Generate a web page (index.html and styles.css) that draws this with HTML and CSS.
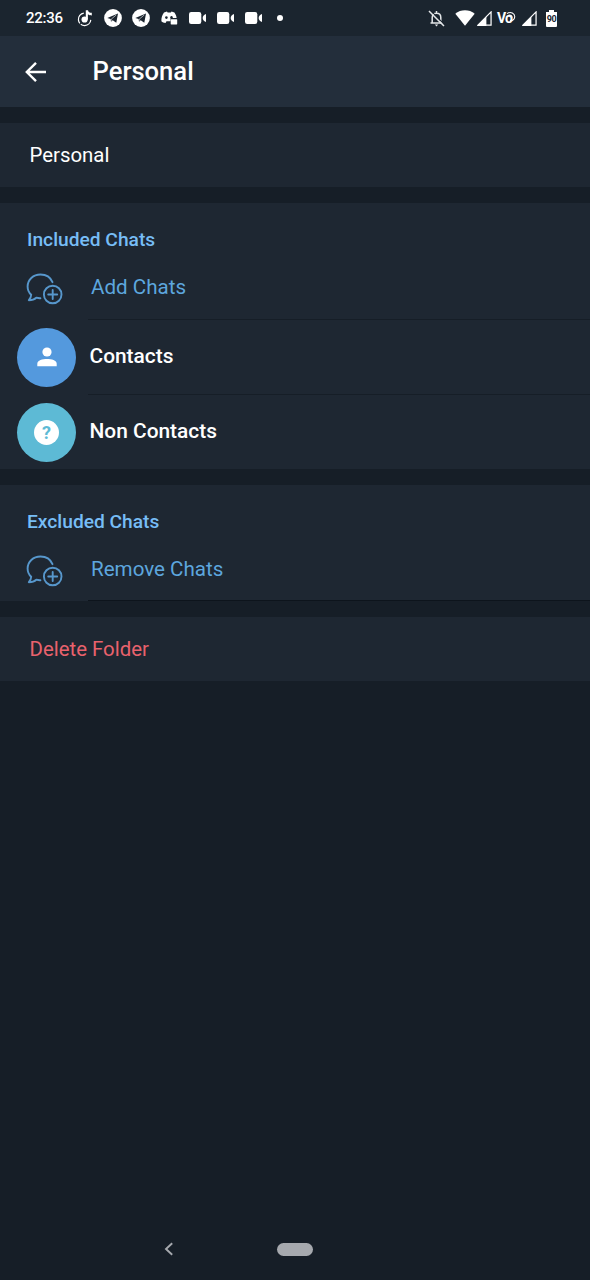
FILE: index.html
```html
<!DOCTYPE html>
<html lang="en">
<head>
  <meta charset="UTF-8" />
  <title>Personal</title>
  <meta name="viewport" content="width=device-width, initial-scale=1" />
  <link rel="stylesheet" href="styles.css">
</head>
<body>
  <!-- shared icons -->
  <svg class="sprite" aria-hidden="true">
    <symbol id="telegram" viewBox="0 0 18 18">
      <circle cx="9" cy="9" r="8.9" fill="#fff"/>
      <path d="M3.3 9 14 4.5 12.3 13.8 8.7 11.2 7 12.7 6.6 10.1Z" fill="#1b252f"/>
      <path d="M7 12.2 7.3 10.1 12.2 6" fill="none" stroke="#fff" stroke-width=".6"/>
    </symbol>
    <symbol id="camera" viewBox="0 0 18 12">
      <rect x="0" y="0" width="12.3" height="12" rx="2.2" fill="#fff"/>
      <path d="M17 2V10C14.6 9 13.7 7.8 13.7 6S14.6 3 17 2Z" fill="#fff"/>
    </symbol>
    <symbol id="signal" viewBox="0 0 16 16">
      <path d="M15 1V15H1Z" fill="none" stroke="#fff" stroke-width="1.3"/>
      <path d="M0 16 10 6V16Z" fill="#fff"/>
    </symbol>
    <symbol id="chat-add" viewBox="0 0 38 32">
      <g fill="none" stroke="#5797cc" stroke-width="1.9" stroke-linecap="round" stroke-linejoin="round">
        <path d="M26.5 9.2C24.5 4.3 20 1.5 14.5 1.5 7.2 1.5 1.6 6.8 1.6 13.5 1.6 17 3 19.7 5.2 21.8 5.1 24 4.2 25.8 2.8 27.2 5.8 27.2 8.5 26.4 10.3 24.7 11.8 25.1 13 25.3 14.4 25.2"/>
        <circle cx="26.7" cy="21.5" r="8.8"/>
        <path d="M26.7 17V26M22.2 21.5H31.2"/>
      </g>
    </symbol>
  </svg>

  <div class="status-bar">
    <span class="clock">22:36</span>
    <div class="notifications">
      <span class="slot">
        <svg width="16" height="18" viewBox="0 0 16 18">
          <path d="M6.8 4.2A6.2 6.2 0 1 0 13.8 10.5" fill="none" stroke="#fff" stroke-width="1.2" stroke-dasharray="13 1.2"/>
          <circle cx="7.6" cy="10.5" r="3.1" fill="#fff"/>
          <path d="M8.8 10.5V1.2H11C11.3 3 12.7 3.8 14.8 3.8V6.4C13.2 6.4 12 6 10.9 5.2V10.5Z" fill="#fff"/>
        </svg>
      </span>
      <span class="slot"><svg width="18" height="18"><use href="#telegram"/></svg></span>
      <span class="slot"><svg width="18" height="18"><use href="#telegram"/></svg></span>
      <span class="slot">
        <svg width="17" height="14" viewBox="0 0 17 14">
          <path d="M3 1.5 6 .4 6.6 1.5H9.8L10.6.4 13.4 1.5C14.8 3.4 15.4 5 15.6 7H9.5V10.3H5.5L4.5 12C2.8 11.8 1.5 11.2.4 10.2.3 7 1.1 4 3 1.5Z" fill="#fff"/>
          <circle cx="5.4" cy="6.6" r="1.3" fill="#1b252f"/>
          <circle cx="10.5" cy="6.2" r="1.2" fill="#1b252f"/>
          <rect x="9.7" y="8.2" width="6.5" height="5.2" rx=".6" fill="#fff"/>
        </svg>
      </span>
      <span class="slot"><svg class="camera" width="18" height="12"><use href="#camera"/></svg></span>
      <span class="slot"><svg class="camera" width="18" height="12"><use href="#camera"/></svg></span>
      <span class="slot"><svg class="camera" width="18" height="12"><use href="#camera"/></svg></span>
      <span class="slot"><i class="dot"></i></span>
    </div>
    <div class="system">
      <svg class="bell" width="17" height="17" viewBox="0 0 17 17">
        <path d="M4.2 13V7.5C4.2 5 5.8 3.3 8.5 3.3S12.8 5 12.8 7.5V13M2.5 13H14.5M8.5 1V3" fill="none" stroke="#e5e8ea" stroke-width="1.5"/>
        <path d="M6.8 14.5H10.2L8.5 16.5Z" fill="#e5e8ea"/>
        <path d="M2.6.6 17 15" stroke="#1b252f" stroke-width="1.1"/>
        <path d="M1 1 16 16" stroke="#e5e8ea" stroke-width="1.5"/>
      </svg>
      <svg class="wifi" width="20" height="16" viewBox="0 0 20 16">
        <path d="M.3 3.8C5.8-.8 14.2-.8 19.7 3.8L10 15.7Z" fill="#fff"/>
      </svg>
      <svg class="signal" width="15" height="15"><use href="#signal"/></svg>
      <span class="volte">Vo<svg width="10" height="12" viewBox="0 0 10 12"><path d="M1 2.6C4.6.2 9 2.4 8.7 6 8.5 8.8 6 10 4 9.4M2 4.6C4.4 3.4 6.6 4.8 5.8 7.2" fill="none" stroke="#fff" stroke-width="1.1"/></svg></span>
      <svg class="signal" width="15" height="15"><use href="#signal"/></svg>
      <span class="battery">90</span>
    </div>
  </div>

  <header class="header">
    <svg class="back" width="22" height="22" viewBox="0 0 22 22">
      <path d="M21 11H2.5M11 1.8 1.8 11 11 20.2" fill="none" stroke="#fff" stroke-width="2.4"/>
    </svg>
    <h1 class="title">Personal</h1>
  </header>

  <main class="content">
    <section class="card field">Personal</section>

    <section class="card">
      <h2 class="section-title">Included Chats</h2>
      <div class="row action">
        <svg class="row-icon" width="38" height="32"><use href="#chat-add"/></svg>
        <span>Add Chats</span>
      </div>
      <div class="row chat">
        <span class="avatar contacts">
          <svg width="20" height="20" viewBox="0 0 20 20">
            <circle cx="10" cy="5" r="4.6" fill="#fff"/>
            <path d="M.3 19.3V16.8C.3 13.5 5.5 12.1 10 12.1S19.7 13.5 19.7 16.8V19.3Z" fill="#fff"/>
          </svg>
        </span>
        <span class="name">Contacts</span>
      </div>
      <div class="row chat">
        <span class="avatar non-contacts"><i class="question">?</i></span>
        <span class="name">Non Contacts</span>
      </div>
    </section>

    <section class="card excluded">
      <h2 class="section-title">Excluded Chats</h2>
      <div class="row action">
        <svg class="row-icon" width="38" height="32"><use href="#chat-add"/></svg>
        <span>Remove Chats</span>
      </div>
    </section>

    <section class="card field delete">Delete Folder</section>
  </main>

  <nav class="nav-bar">
    <svg width="10" height="14" viewBox="0 0 10 14">
      <path d="M8.2 1.2 2 7 8.2 12.8" fill="none" stroke="#a6a9ae" stroke-width="1.9"/>
    </svg>
    <span class="home"></span>
  </nav>
</body>
</html>
```

FILE: styles.css
```css
:root {
  --bg: #161e27;
  --card: #1e2732;
  --header: #232e3b;
  --status: #1b252f;
  --line: #161e27;
}
* {
  box-sizing: border-box;
}
body {
  margin: 0;
  height: 1280px;
  display: flex;
  flex-direction: column;
  background: var(--bg);
  color: #fff;
  font-family: Roboto, "Liberation Sans", sans-serif;
  overflow: hidden;
}
svg {
  display: block;
  flex: none;
}
.sprite {
  position: absolute;
  width: 0;
  height: 0;
}

/* status bar */
.status-bar {
  flex: none;
  height: 36px;
  display: flex;
  align-items: center;
  padding: 0 33px 0 26px;
  background: var(--status);
}
.clock {
  width: 45px;
  font-size: 15px;
  font-weight: 500;
  letter-spacing: -0.25px;
}
.notifications {
  display: flex;
}
.slot {
  width: 28px;
  height: 36px;
  display: flex;
  align-items: center;
  justify-content: center;
}
.camera {
  margin-left: 2px;
}
.dot {
  width: 6px;
  height: 6px;
  margin-right: 2px;
  border-radius: 50%;
  background: #fff;
}
.system {
  margin-left: auto;
  display: flex;
  align-items: center;
}
.bell {
  margin-right: 10px;
}
.wifi {
  margin-right: 2px;
}
.volte {
  width: 30px;
  padding-left: 5px;
  display: flex;
  align-items: center;
  font-size: 14px;
  font-weight: 700;
  letter-spacing: -0.8px;
}
.volte svg {
  margin: -2px 0 0 -6px;
}
.battery {
  width: 11px;
  height: 17px;
  margin-left: 9px;
  background: linear-gradient(#fff, #fff) center top / 5px 3px no-repeat,
    linear-gradient(#fff, #fff) center bottom / 11px 15px no-repeat;
  border-radius: 1px;
  color: #1b252f;
  font-size: 9px;
  font-weight: 700;
  line-height: 19px;
  text-align: center;
  letter-spacing: -0.3px;
}

/* header */
.header {
  flex: none;
  height: 71px;
  display: flex;
  align-items: center;
  padding-left: 25px;
  background: var(--header);
}
.title {
  margin: 0 0 1px 45.5px;
  font-size: 25.6px;
  font-weight: 500;
}

/* cards */
.content {
  display: flex;
  flex-direction: column;
  gap: 16px;
  padding-top: 16px;
}
.card {
  background: var(--card);
}
.field {
  height: 64px;
  padding-left: 29.5px;
  font-size: 20.4px;
  line-height: 65px;
}
.section-title {
  margin: 0;
  height: 52px;
  padding: 22px 0 0 27px;
  font-size: 19.2px;
  font-weight: 500;
  line-height: 29px;
  color: #77bdf6;
}
.row {
  display: flex;
  align-items: center;
  font-size: 20.6px;
}
.row + .row {
  background: linear-gradient(var(--line), var(--line)) 88px 0 / 100% 1px no-repeat;
}
.action {
  height: 64px;
  padding-left: 26.4px;
  color: #5da6de;
}
.row-icon {
  margin: 3px 26.6px 0 0;
}
.chat {
  height: 75px;
  padding-left: 17px;
  font-size: 20.9px;
  font-weight: 500;
}
.avatar {
  width: 59px;
  height: 59px;
  margin: 1px 13.5px 0 0;
  display: flex;
  align-items: center;
  justify-content: center;
  border-radius: 50%;
}
.name {
  padding-bottom: 2px;
}
.contacts {
  background: #5499dd;
}
.non-contacts {
  background: #5dbad5;
}
.question {
  width: 25px;
  height: 25px;
  border-radius: 50%;
  background: #fff;
  color: #5dbad5;
  font-size: 18px;
  font-style: normal;
  font-weight: 700;
  line-height: 26px;
  text-align: center;
}
.excluded {
  background: linear-gradient(#0d141c, #0d141c) 88px 100% / 100% 1px no-repeat, var(--card);
}
.delete {
  color: #e9626d;
}

/* system navigation */
.nav-bar {
  height: 62px;
  margin-top: auto;
  padding-left: 164px;
  display: flex;
  align-items: center;
  gap: 103px;
}
.home {
  width: 36px;
  height: 13px;
  border-radius: 7px;
  background: #a6a9ae;
}
```
